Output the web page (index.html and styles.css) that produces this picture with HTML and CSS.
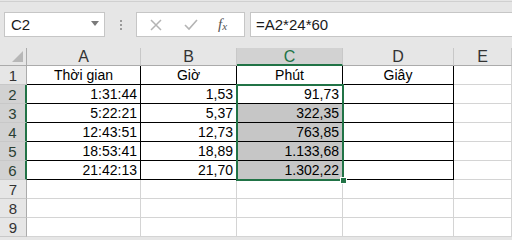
FILE: index.html
```html
<!DOCTYPE html>
<html>
<head>
<meta charset="utf-8">
<link rel="stylesheet" href="styles.css">
</head>
<body>
<div class="app">
  <div class="toolbar">
    <div class="namebox"><span>C2</span><span class="caret"></span></div>
    <div class="dots"><i></i><i></i><i></i></div>
    <div class="fxbox">
      <svg class="ico" width="14" height="14" viewBox="0 0 14 14"><path d="M2 2 L12 12 M12 2 L2 12" stroke="#b4b4b4" stroke-width="1.5" fill="none"/></svg>
      <svg class="ico" width="16" height="14" viewBox="0 0 16 14"><path d="M2 7 L6 11 L14 2" stroke="#b4b4b4" stroke-width="1.6" fill="none"/></svg>
      <span class="fx">f<sub>x</sub></span>
    </div>
    <div class="formula">=A2*24*60</div>
  </div>
  <div class="sheet">
    <div class="grid">
      <div class="h corner"><span class="tri"></span></div>
      <div class="h col">A</div>
      <div class="h col">B</div>
      <div class="h col sel">C</div>
      <div class="h col">D</div>
      <div class="h col">E</div>

      <div class="h row">1</div>
      <div class="c t ctr">Thời gian</div>
      <div class="c t ctr">Giờ</div>
      <div class="c t ctr">Phút</div>
      <div class="c t ctr">Giây</div>
      <div class="c"></div>

      <div class="h row sel">2</div>
      <div class="c t">1:31:44</div>
      <div class="c t">1,53</div>
      <div class="c t">91,73</div>
      <div class="c t"></div>
      <div class="c"></div>

      <div class="h row sel">3</div>
      <div class="c t">5:22:21</div>
      <div class="c t">5,37</div>
      <div class="c t hl">322,35</div>
      <div class="c t"></div>
      <div class="c"></div>

      <div class="h row sel">4</div>
      <div class="c t">12:43:51</div>
      <div class="c t">12,73</div>
      <div class="c t hl">763,85</div>
      <div class="c t"></div>
      <div class="c"></div>

      <div class="h row sel">5</div>
      <div class="c t">18:53:41</div>
      <div class="c t">18,89</div>
      <div class="c t hl">1.133,68</div>
      <div class="c t"></div>
      <div class="c"></div>

      <div class="h row sel">6</div>
      <div class="c t">21:42:13</div>
      <div class="c t">21,70</div>
      <div class="c t hl">1.302,22</div>
      <div class="c t"></div>
      <div class="c"></div>

      <div class="h row">7</div>
      <div class="c"></div><div class="c"></div><div class="c"></div><div class="c"></div><div class="c"></div>
      <div class="h row">8</div>
      <div class="c"></div><div class="c"></div><div class="c"></div><div class="c"></div><div class="c"></div>
      <div class="h row">9</div>
      <div class="c"></div><div class="c"></div><div class="c"></div><div class="c"></div><div class="c"></div>
    </div>
    <div class="selection"><span class="handle"></span></div>
  </div>
</div>
</body>
</html>
```
FILE: styles.css
```css
* { box-sizing: border-box; }
html, body { margin: 0; padding: 0; }
body {
  width: 512px; height: 240px; overflow: hidden;
  background: #e6e6e6;
  font-family: "Liberation Sans", Arial, sans-serif;
  font-size: 14px; color: #000;
}
.toolbar {
  height: 47px;
  border-top: 1px solid #d0d0d0;
  margin-top: 1px;
  display: flex; align-items: flex-start;
  padding-top: 10px;
}
.namebox {
  margin-left: 4px; width: 101px; height: 25px;
  background: #fff; border: 1px solid #c6c6c6;
  display: flex; align-items: center; justify-content: space-between;
  padding: 0 5px 0 6px; font-size: 15px; color: #1a1a1a;
}
.caret {
  width: 0; height: 0;
  border-left: 4px solid transparent; border-right: 4px solid transparent;
  border-top: 5px solid #7a7a7a; margin-bottom: 2px;
}
.dots {
  width: 31px; height: 25px;
  display: flex; flex-direction: column; align-items: center; justify-content: center; gap: 2px;
}
.dots i { display: block; width: 2px; height: 2px; background: #9a9a9a; }
.fxbox {
  width: 109px; height: 25px; background: #fff; border: 1px solid #c6c6c6;
  display: flex; align-items: center; padding-left: 12px;
}
.fxbox .ico:first-child { margin-right: 20px; }
.fxbox .ico:nth-child(2) { margin-right: 19px; }
.fx {
  font-family: "Liberation Serif", serif; font-style: italic; font-size: 15px; color: #555;
  line-height: 1;
}
.fx sub { font-size: 11px; vertical-align: -1px; }
.formula {
  margin-left: 5px; flex: 1; height: 25px; background: #fff;
  border: 1px solid #c6c6c6; border-right: none;
  padding-left: 5px; line-height: 23px; font-size: 15px; color: #1a1a1a;
}
.sheet { position: relative; background: #fff; }
.grid {
  display: grid;
  grid-template-columns: 27px 114px 96px 106px 111px 1fr;
  grid-template-rows: 18px repeat(9, 19px);
}
.h {
  background: #e6e6e6; color: #333;
  border-right: 1px solid #c8c8c8; border-bottom: 1px solid #ababab;
  display: flex; align-items: center; justify-content: center;
  font-size: 15px; line-height: 1;
}
.h.col { padding-top: 1px; font-size: 16px; }
.h.row { border-bottom-color: #c8c8c8; border-right-color: #ababab; }
.h.sel { background: #d2d2d2; }
.h.col.sel { color: #217346; border-bottom: 2px solid #217346; }
.h.row.sel { border-right: 2px solid #217346; color: #2a3f33; }
.corner { position: relative; border-right-color: #ababab; }
.tri {
  position: absolute; right: 3px; bottom: 3px; width: 0; height: 0;
  border-left: 11px solid transparent; border-bottom: 11px solid #b7b7b7;
}
.c {
  border-right: 1px solid #d4d4d4; border-bottom: 1px solid #d4d4d4;
  text-align: right; padding-right: 3px; line-height: 19px;
  white-space: nowrap; overflow: hidden;
}
.c.t { border-right-color: #000; border-bottom-color: #000; }
.c.ctr { text-align: center; padding-right: 0; }
.c.hl { background: #c6c6c6; }
.selection {
  position: absolute; left: 236px; top: 36px; width: 108px; height: 97px;
  border: 2px solid #217346; pointer-events: none;
}
.handle {
  position: absolute; right: -5px; bottom: -5px; width: 7px; height: 7px;
  background: #217346; border: 1px solid #fff;
}
```
